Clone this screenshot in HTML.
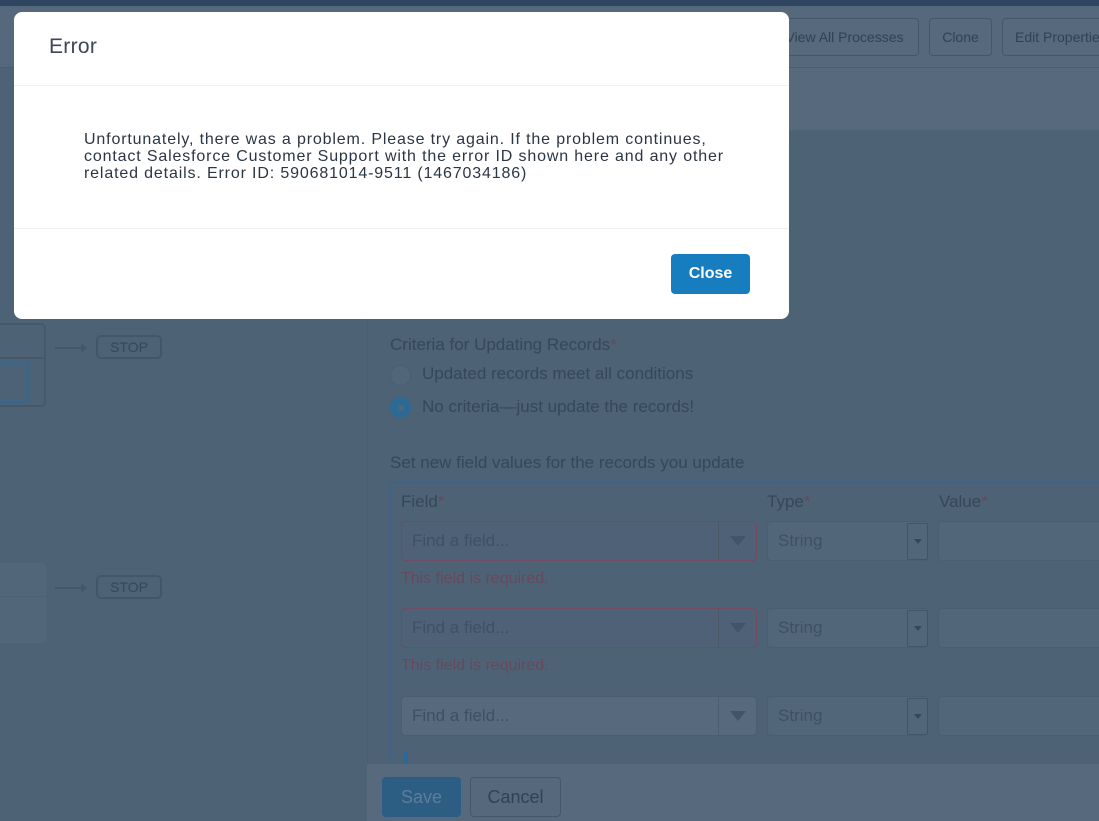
<!DOCTYPE html>
<html><head><meta charset="utf-8"><style>
*{box-sizing:border-box;margin:0;padding:0}
body{width:1099px;height:821px;overflow:hidden;background:#4e6276;font-family:"Liberation Sans",sans-serif;position:relative;color:#34475b}
.abs{position:absolute}
.n{font-family:"Liberation Sans",sans-serif}
.btn{position:absolute;border:1px solid #44586c;border-radius:4px;background:#56697d;color:#2f4256;font-size:14px;display:flex;align-items:center;justify-content:center}
.inp{position:absolute;border:1px solid #4a5e72;border-radius:4px;background:#52667a}
.red{border-color:#704c62;background:#4f6176}
.ph{position:absolute;left:10px;top:9px;font-size:17px;color:#3e5063}
.err{position:absolute;font-size:16px;color:#66495e}
.ast{color:#66495e}
.stop{position:absolute;width:66px;height:24px;border:2px solid #425669;border-radius:5px;font-size:14px;color:#34475b;display:flex;align-items:center;justify-content:center}
.arr{position:absolute;width:26px;height:2px;background:#44586b}
.arr:after{content:"";position:absolute;right:-6px;top:-4px;border-left:6px solid #44586b;border-top:5px solid transparent;border-bottom:5px solid transparent}
</style></head><body>
<div class="abs" style="left:0;top:0;width:1099px;height:6px;background:#2e4560"></div>
<div class="abs" style="left:0;top:6px;width:1099px;height:62px;background:#55687c;border-bottom:1px solid #4a5e71"></div>
<div class="abs" style="left:367px;top:68px;width:732px;height:62px;background:#56697d"></div>
<div class="abs" style="left:367px;top:130px;width:1px;height:691px;background:#4a5e71"></div>
<div class="btn" style="left:770px;top:18px;width:149px;height:38px">View All Processes</div>
<div class="btn" style="left:929px;top:18px;width:63px;height:38px">Clone</div>
<div class="btn" style="left:1002px;top:18px;width:110px;height:38px;justify-content:flex-start;padding-left:12px">Edit Properties</div>

<div class="abs" style="left:-10px;top:323px;width:56px;height:84px;border:2px solid #45596c;border-radius:5px"></div>
<div class="abs" style="left:-10px;top:357px;width:56px;height:2px;background:#45596c"></div>
<div class="abs" style="left:-10px;top:361px;width:40px;height:42px;border:4px solid #3e6585;border-radius:5px"></div>
<div class="arr" style="left:55px;top:347px"></div>
<div class="stop" style="left:96px;top:335px">STOP</div>
<div class="abs" style="left:-10px;top:563px;width:56px;height:80px;border:1px solid #53677a;border-radius:5px;background:#52667a"></div>
<div class="abs" style="left:-10px;top:596px;width:56px;height:1px;background:#4d6175"></div>
<div class="arr" style="left:55px;top:587px"></div>
<div class="stop" style="left:96px;top:575px">STOP</div>

<div class="abs n" style="left:390px;top:335px;font-size:17px">Criteria for Updating Records<span class="ast">*</span></div>
<div class="abs" style="left:390px;top:365px;width:21px;height:21px;border-radius:50%;border:1px solid #4a5e71;background:#52667a"></div>
<div class="abs n" style="left:422px;top:364px;font-size:17px">Updated records meet all conditions</div>
<div class="abs" style="left:390px;top:397px;width:21px;height:21px;border-radius:50%;background:#2c6a96"></div>
<div class="abs" style="left:398px;top:405px;width:6px;height:6px;border-radius:50%;background:#52667a"></div>
<div class="abs n" style="left:422px;top:397px;font-size:17px">No criteria—just update the records!</div>
<div class="abs n" style="left:390px;top:453px;font-size:17px">Set new field values for the records you update</div>
<div class="abs" style="left:390px;top:482px;width:720px;height:300px;border:1px solid #3b6288;border-radius:4px"></div>
<div class="abs n" style="left:401px;top:492px;font-size:17px">Field<span class="ast">*</span></div>
<div class="abs n" style="left:767px;top:492px;font-size:17px">Type<span class="ast">*</span></div>
<div class="abs n" style="left:939px;top:492px;font-size:17px">Value<span class="ast">*</span></div>

<div class="inp red" style="left:401px;top:521px;width:356px;height:40px"><span class="ph n">Find a field...</span><div class="abs" style="left:316px;top:0;width:1px;height:38px;background:#4a5868"></div><div class="abs" style="left:328px;top:14px;border-left:8px solid transparent;border-right:8px solid transparent;border-top:10px solid #41556a"></div></div>
<div class="inp" style="left:767px;top:521px;width:161px;height:40px"><span class="ph n">String</span><div class="abs" style="left:139px;top:1px;width:21px;height:37px;border:1px solid #41556a;border-radius:2px"></div><div class="abs" style="left:146px;top:17px;border-left:4px solid transparent;border-right:4px solid transparent;border-top:5px solid #34475b"></div></div>
<div class="inp" style="left:938px;top:521px;width:170px;height:40px"></div>
<div class="err n" style="left:401px;top:570px">This field is required.</div>

<div class="inp red" style="left:401px;top:608px;width:356px;height:40px"><span class="ph n">Find a field...</span><div class="abs" style="left:316px;top:0;width:1px;height:38px;background:#4a5868"></div><div class="abs" style="left:328px;top:14px;border-left:8px solid transparent;border-right:8px solid transparent;border-top:10px solid #41556a"></div></div>
<div class="inp" style="left:767px;top:608px;width:161px;height:40px"><span class="ph n">String</span><div class="abs" style="left:139px;top:1px;width:21px;height:37px;border:1px solid #41556a;border-radius:2px"></div><div class="abs" style="left:146px;top:17px;border-left:4px solid transparent;border-right:4px solid transparent;border-top:5px solid #34475b"></div></div>
<div class="inp" style="left:938px;top:608px;width:170px;height:40px"></div>
<div class="err n" style="left:401px;top:657px">This field is required.</div>

<div class="inp" style="left:401px;top:696px;width:356px;height:40px;background:#56697d"><span class="ph n">Find a field...</span><div class="abs" style="left:316px;top:0;width:1px;height:38px;background:#4a5e71"></div><div class="abs" style="left:328px;top:14px;border-left:8px solid transparent;border-right:8px solid transparent;border-top:10px solid #41556a"></div></div>
<div class="inp" style="left:767px;top:696px;width:161px;height:40px"><span class="ph n">String</span><div class="abs" style="left:139px;top:1px;width:21px;height:37px;border:1px solid #41556a;border-radius:2px"></div><div class="abs" style="left:146px;top:17px;border-left:4px solid transparent;border-right:4px solid transparent;border-top:5px solid #34475b"></div></div>
<div class="inp" style="left:938px;top:696px;width:170px;height:40px"></div>
<div class="abs" style="left:404px;top:752px;width:4px;height:12px;background:#2c6a96"></div>

<div class="abs" style="left:367px;top:764px;width:732px;height:57px;background:#56697d"></div>
<div class="abs n" style="left:382px;top:777px;width:79px;height:40px;background:#2c5d82;border-radius:4px;color:#5d7d9b;font-size:18px;display:flex;align-items:center;justify-content:center">Save</div>
<div class="btn n" style="left:470px;top:777px;width:91px;height:40px;font-size:18px;background:#55687c">Cancel</div>

<div class="abs" style="left:14px;top:12px;width:775px;height:307px;background:#fff;border-radius:8px">
<div class="abs" style="left:35px;top:23px;font-size:21px;color:#3a4757;letter-spacing:0.3px">Error</div>
<div class="abs" style="left:0;top:73px;width:775px;height:1px;background:#eef1f4"></div>
<div class="abs" style="left:70px;top:119px;font-size:16px;line-height:17px;letter-spacing:0.85px;color:#2b3644;width:700px;white-space:nowrap">Unfortunately, there was a problem. Please try again. If the problem continues,<br>contact Salesforce Customer Support with the error ID shown here and any other<br>related details. Error ID: 590681014-9511 (1467034186)</div>
<div class="abs" style="left:0;top:216px;width:775px;height:1px;background:#eef1f4"></div>
<div class="abs" style="left:657px;top:242px;width:79px;height:40px;background:#167dbf;border-radius:4px;color:#fff;font-size:16px;font-weight:bold;display:flex;align-items:center;justify-content:center">Close</div>
</div>
</body></html>
